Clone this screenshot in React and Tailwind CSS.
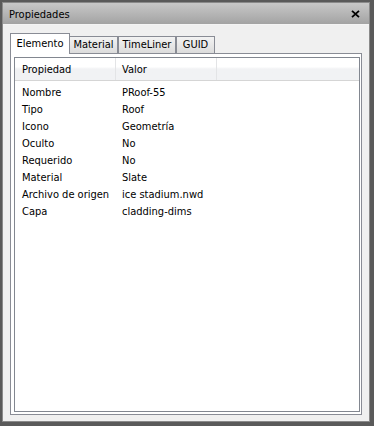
import React from "react";

const rows = [
  ["Nombre", "PRoof-55"],
  ["Tipo", "Roof"],
  ["Icono", "Geometría"],
  ["Oculto", "No"],
  ["Requerido", "No"],
  ["Material", "Slate"],
  ["Archivo de origen", "ice stadium.nwd"],
  ["Capa", "cladding-dims"],
];

export default function App() {
  const font = { fontFamily: '"DejaVu Sans Condensed", "Liberation Sans", sans-serif' };
  return (
    <div
      className="w-[374px] h-[426px] bg-[#5a5a5a] pl-[2px] pt-[2px] pr-[4px] pb-[4px] text-[11px] text-black"
      style={font}
    >
      <div className="w-full h-full border border-[#8a8a8a] flex flex-col bg-[#f0f0f0]">
        {/* Title bar */}
        <div className="h-[22px] bg-gradient-to-b from-[#c8c8c8] to-[#a3a3a3] flex items-center justify-between pl-[6px] pr-[9px] border-b border-[#f4f4f4]">
          <span className="leading-none mt-[1px]">Propiedades</span>
          <svg width="9" height="8" viewBox="0 0 9 8" className="mt-[1px]">
            <path d="M1 0.8 L8 7.2 M8 0.8 L1 7.2" stroke="#000" strokeWidth="1.8" />
          </svg>
        </div>
        {/* Body */}
        <div className="flex-1 flex flex-col pt-[8px] px-[7px] pb-[6px]">
          {/* Tabs */}
          <div className="flex items-end h-[20px] relative z-10">
            <div className="w-[60px] h-[21px] bg-white border-l border-t border-r border-[#898c95] flex items-center justify-center -mb-[1px] pt-[1px]">
              Elemento
            </div>
            <div className="w-[48px] h-[17px] bg-gradient-to-b from-[#f3f3f3] to-[#dcdcdc] border-t border-r border-[#898c95] flex items-center justify-center pt-[1px]">
              Material
            </div>
            <div className="w-[58px] h-[17px] bg-gradient-to-b from-[#f3f3f3] to-[#dcdcdc] border-t border-l border-r border-[#898c95] flex items-center justify-center pt-[1px]">
              TimeLiner
            </div>
            <div className="w-[39px] h-[17px] bg-gradient-to-b from-[#f3f3f3] to-[#dcdcdc] border-t border-l border-r border-[#898c95] flex items-center justify-center pt-[1px]">
              GUID
            </div>
          </div>
          {/* Panel */}
          <div className="flex-1 border border-[#898c95] bg-white pl-[3px] pt-[3px] pr-[1px] pb-[2px] flex">
            <div className="flex-1 border border-[#828790] bg-white flex flex-col">
              <div className="h-[23px] flex border-b border-[#d5d5d5] bg-gradient-to-b from-white from-40% to-[#f1f2f4] to-50%">
                <div className="w-[101px] flex items-center pl-[7px] pt-[3px] border-r border-[#e3e4e6]">Propiedad</div>
                <div className="w-[101px] flex items-center pl-[6px] pt-[3px] border-r border-[#e3e4e6]">Valor</div>
                <div className="flex-1" />
              </div>
              <div className="flex flex-col pt-[3px]">
                {rows.map(([k, v]) => (
                  <div key={k} className="h-[17px] flex items-center pt-[2px]">
                    <div className="w-[101px] pl-[7px] whitespace-nowrap">{k}</div>
                    <div className="pl-[6px] whitespace-nowrap">{v}</div>
                  </div>
                ))}
              </div>
            </div>
          </div>
        </div>
      </div>
    </div>
  );
}
